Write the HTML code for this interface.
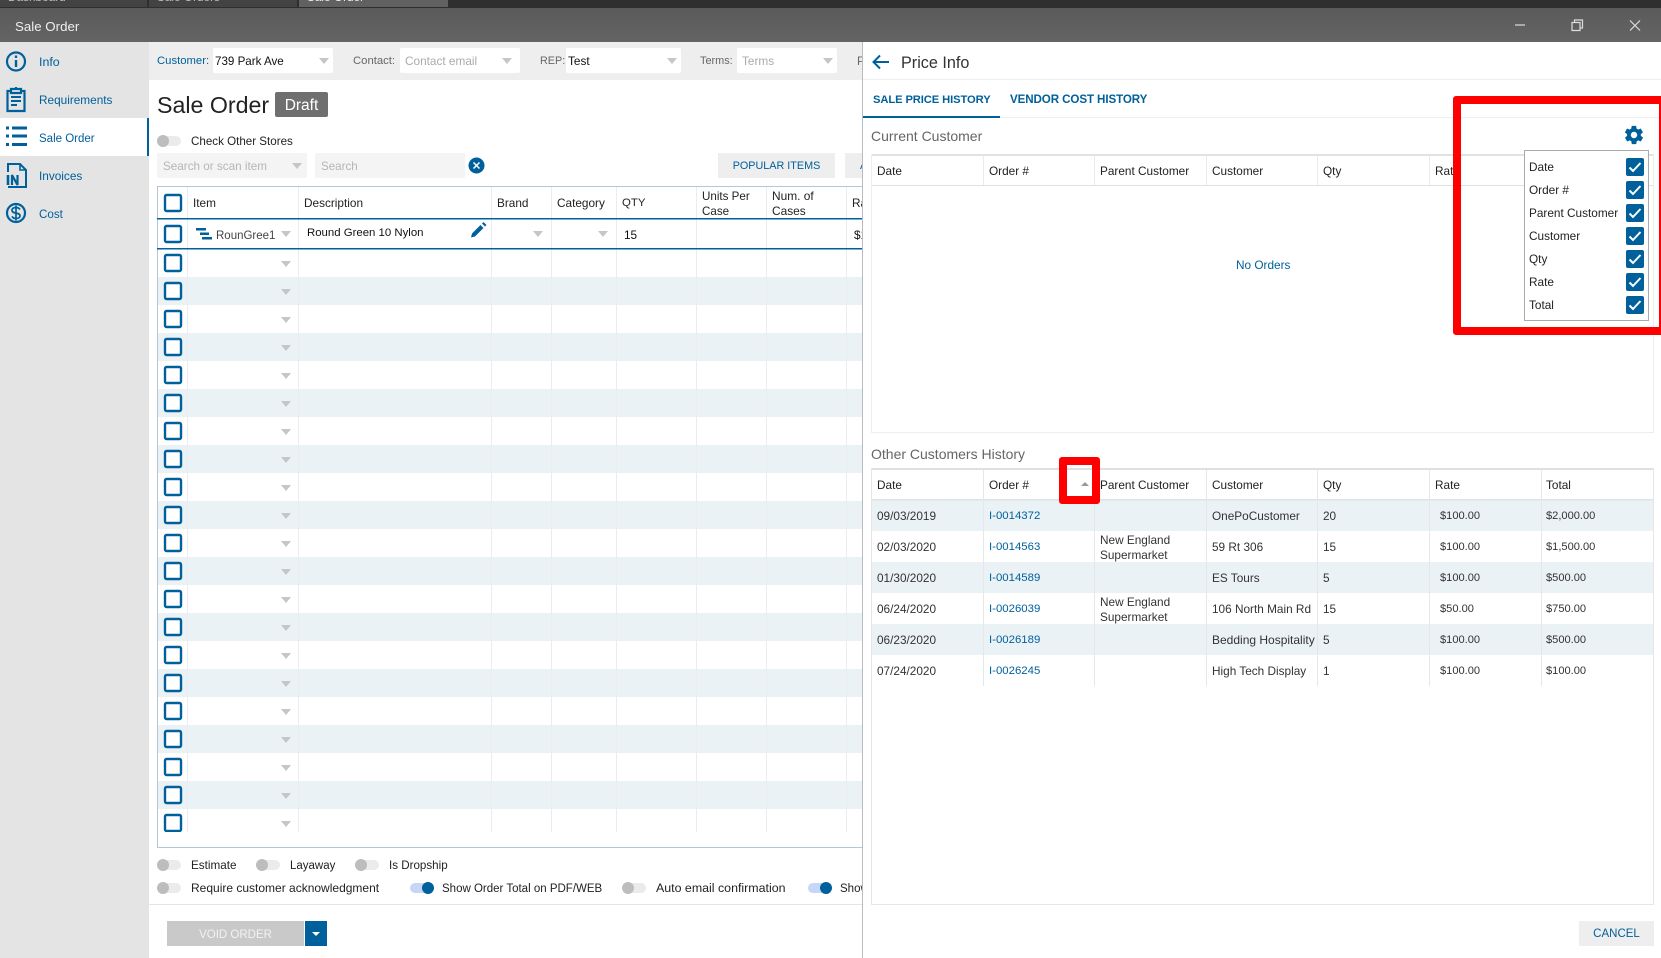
<!DOCTYPE html>
<html><head><meta charset="utf-8"><title>Sale Order</title>
<style>
html,body{margin:0;padding:0;width:1661px;height:958px;overflow:hidden;background:#fff}
body{position:relative;font-family:"Liberation Sans",sans-serif;font-size:11.8px;color:#333}
.a{position:absolute}
.t{position:absolute;white-space:nowrap;line-height:16px}
.b{color:#00609b}
.g{color:#aaa}
.k{color:#111}
.m{font-size:11.1px}
.box{position:absolute;background:#fff;border-radius:2px}
.tri{position:absolute;width:0;height:0;border-left:5px solid transparent;border-right:5px solid transparent;border-top:6px solid #c6c6c6}
.tg{position:absolute;width:24px;height:10px;border-radius:5px;background:#ebebeb}
.tg i{position:absolute;left:0;top:-1px;width:12px;height:12px;border-radius:50%;background:#bdbdbd}
.tg.on{background:#c6d6f6}
.tg.on i{left:12px;background:#00609b}
.cb{position:absolute;left:1626px;width:18px;height:18px;background:#00609b;border-radius:2px}
.cb svg{display:block}
</style></head><body>

<!-- top bars -->
<div class="a" style="left:0;top:0;width:1661px;height:8px;background:#2f2f2f"></div>
<div class="a" style="left:0;top:0;width:147px;height:7px;background:#434343"></div>
<div class="a" style="left:149px;top:0;width:148px;height:7px;background:#434343"></div>
<div class="a" style="left:299px;top:0;width:149px;height:7px;background:#616161"></div>
<div class="t" style="left:8px;top:-11px;color:#bbb">Dashboard</div>
<div class="t" style="left:157px;top:-11px;color:#bbb">Sale Orders</div>
<div class="t" style="left:307px;top:-11px;color:#eee">Sale Order</div>
<div class="a" style="left:0;top:8px;width:1661px;height:34px;background:linear-gradient(#5a5a5a,#646464)"></div>
<div class="t" style="left:15px;top:19px;color:#eee;font-size:13.300px">Sale Order</div>
<svg class="a" style="left:1510px;top:15px" width="140" height="20" fill="none" stroke="#ddd" stroke-width="1.200">
<path d="M5 10H15"/><path d="M62 7.500h8v8h-8zM64.500 7.500V5h8v8H70"/><path d="M120 5.500l10 10M130 5.500l-10 10"/></svg>

<!-- sidebar -->
<div class="a" style="left:0;top:42px;width:149px;height:916px;background:#e4e4e4"></div>
<div class="a" style="left:0;top:118px;width:147px;height:38px;background:#fff;border-right:2px solid #00609b"></div>
<svg class="a" style="left:0;top:42px" width="32" height="190" fill="none" stroke="#00609b">
<circle cx="16" cy="19.500" r="9" stroke-width="2.200"/>
<path d="M16 18v7" stroke-width="2.400"/><path d="M16 13.500v2.400" stroke-width="2.400"/>
<path d="M10 49H7.500v20h17V49H22M11 47h10v4H11zM16 45v2" stroke-width="2.200"/>
<path d="M11 55h10M11 59h10M11 63h6" stroke-width="2"/>
<path d="M6 86h3M6 94h3M6 102.500h3M12 86h15M12 94h15M12 102.500h15" stroke-width="3"/>
<path d="M8 130v-8h12l6 6v17H8" stroke-width="2"/><path d="M20 122v6h6" stroke-width="1.600"/>
<path d="M8 133v10" stroke-width="2.600"/><path d="M12 143v-10l5.500 10v-10" stroke-width="2.200"/>
<circle cx="16" cy="171" r="9" stroke-width="2.200"/>
<path d="M20 167.500c-1-1.500-2.500-2-4-2-2.300 0-4 1-4 2.800 0 4 8 1.700 8 5.400 0 1.800-1.700 2.800-4 2.800-1.700 0-3.200-.7-4-2.200M16 163.500v15" stroke-width="1.700"/>
</svg>
<div class="t b" style="left:39px;top:54px;font-size:12.400px">Info</div>
<div class="t b" style="left:39px;top:92px">Requirements</div>
<div class="t b" style="left:39px;top:131px;font-size:11.500px">Sale Order</div>
<div class="t b" style="left:39px;top:168px">Invoices</div>
<div class="t b" style="left:39px;top:207px;font-size:11.600px">Cost</div>

<!-- toolbar -->
<div class="a" style="left:149px;top:42px;width:714px;height:38px;background:#eee"></div>
<div class="box" style="left:213px;top:48px;width:120px;height:25px"></div>
<div class="box" style="left:400px;top:48px;width:120px;height:25px"></div>
<div class="box" style="left:566px;top:48px;width:115px;height:25px"></div>
<div class="box" style="left:737px;top:48px;width:100px;height:25px"></div>
<div class="t b" style="left:157px;top:53px;font-size:11.300px">Customer:</div>
<div class="t k" style="left:215px;top:54px;font-size:11.600px">739 Park Ave</div>
<div class="tri" style="left:319px;top:58px"></div>
<div class="t" style="left:353px;top:53px;color:#666;font-size:11.300px">Contact:</div>
<div class="t g" style="left:405px;top:53px">Contact email</div>
<div class="tri" style="left:502px;top:58px"></div>
<div class="t" style="left:540px;top:53px;color:#666;font-size:10.800px">REP:</div>
<div class="t k" style="left:568px;top:53px">Test</div>
<div class="tri" style="left:667px;top:58px"></div>
<div class="t" style="left:700px;top:53px;color:#666;font-size:10.900px">Terms:</div>
<div class="t g" style="left:742px;top:53px">Terms</div>
<div class="tri" style="left:823px;top:58px"></div>
<div class="t" style="left:857px;top:53px;color:#666">P</div>

<!-- heading -->
<div class="t" style="left:157px;top:91px;font-size:23.200px;line-height:28px;color:#222">Sale Order</div>
<div class="a" style="left:275px;top:92px;width:53px;height:25px;background:#6f6f6f;border-radius:2px;color:#fff;font-size:15.500px;line-height:27px;text-align:center">Draft</div>
<div class="tg" style="left:157px;top:136px"><i></i></div>
<div class="t" style="left:191px;top:134px;color:#222;font-size:11.600px">Check Other Stores</div>

<!-- search -->
<div class="a" style="left:157px;top:153px;width:150px;height:25px;background:#f4f4f4;border-radius:2px"></div>
<div class="t" style="left:163px;top:159px;color:#b5b5b5;font-size:11.700px">Search or scan item</div>
<div class="tri" style="left:292px;top:163px"></div>
<div class="a" style="left:315px;top:153px;width:150px;height:25px;background:#f4f4f4;border-radius:2px"></div>
<div class="t" style="left:321px;top:159px;color:#b5b5b5;font-size:11.600px">Search</div>
<svg class="a" style="left:468px;top:157px" width="18" height="18"><circle cx="8.500" cy="8.500" r="8" fill="#00609b"/><path d="M5.500 5.500l6 6M11.500 5.500l-6 6" stroke="#fff" stroke-width="1.500"/></svg>
<div class="a b" style="left:718px;top:153px;width:117px;height:25px;background:#eee;font-size:10.800px;line-height:27px;text-align:center">POPULAR ITEMS</div>
<div class="a b" style="left:845px;top:153px;width:18px;height:25px;background:#eee;font-size:10.800px;line-height:27px;text-indent:15px;overflow:hidden">A</div>

<!-- main table -->
<svg class="a" style="left:157px;top:186px" width="706" height="662">
<defs>
<pattern id="rw" x="0" y="63" width="706" height="56" patternUnits="userSpaceOnUse">
<rect y="28" width="706" height="28" fill="#ebf2f6"/>
<rect x="8" y="6" width="16" height="16" rx="1.500" fill="#fff" stroke="#00609b" stroke-width="2.400"/>
<rect x="8" y="34" width="16" height="16" rx="1.500" fill="#fff" stroke="#00609b" stroke-width="2.400"/>
<path d="M124 12h10l-5 6z" fill="#c6c6c6"/><path d="M124 40h10l-5 6z" fill="#c6c6c6"/>
</pattern>
</defs>
<rect x="0" y="63" width="706" height="583" fill="url(#rw)"/>
<g fill="#e9edf0">
<rect x="30" y="1" width="1" height="645"/><rect x="141" y="1" width="1" height="645"/><rect x="334" y="1" width="1" height="645"/><rect x="394" y="1" width="1" height="645"/><rect x="459" y="1" width="1" height="645"/><rect x="539" y="1" width="1" height="645"/><rect x="609" y="1" width="1" height="645"/><rect x="689" y="1" width="1" height="645"/>
</g>
<rect x="0" y="0" width="706" height="1" fill="#b4c6d8"/>
<rect x="0" y="661" width="706" height="1" fill="#b4c6d8"/>
<rect x="0" y="0" width="1" height="662" fill="#b4c6d8"/>
<rect x="0" y="32" width="706" height="1.500" fill="#00609b"/>
<rect x="0" y="62" width="706" height="1.500" fill="#00609b"/>
<rect x="8" y="9" width="16" height="16" rx="1.500" fill="#fff" stroke="#00609b" stroke-width="2.400"/>
<rect x="8" y="40" width="16" height="16" rx="1.500" fill="#fff" stroke="#00609b" stroke-width="2.400"/>
<path d="M39 42h10v2.500H39zM43 46.500h9v2.500h-9zM45 51h10v2.500H45z" fill="#00609b"/>
<path d="M124 45h10l-5 6z" fill="#c6c6c6"/><path d="M376 45h10l-5 6z" fill="#c6c6c6"/><path d="M441 45h10l-5 6z" fill="#c6c6c6"/>
<path d="M314 51.500l1-4 8.500-8.500 3 3-8.500 8.500zM325 37.500l1.500-1.500 3 3-1.500 1.500z" fill="#00609b"/>
</svg>
<div class="t" style="left:193px;top:195px;color:#222">Item</div>
<div class="t" style="left:304px;top:195px;color:#222">Description</div>
<div class="t" style="left:497px;top:195px;color:#222">Brand</div>
<div class="t" style="left:557px;top:195px;color:#222">Category</div>
<div class="t" style="left:622px;top:195px;color:#222;font-size:11.400px">QTY</div>
<div class="t" style="left:702px;top:189px;color:#222;line-height:15px;font-size:11.600px">Units Per<br>Case</div>
<div class="t" style="left:772px;top:189px;color:#222;line-height:15px;font-size:11.900px">Num. of<br>Cases</div>
<div class="t" style="left:852px;top:195px;color:#222">Ra</div>
<div class="t" style="left:216px;top:228px;color:#444;font-size:11.500px">RounGree1</div>
<div class="t k" style="left:307px;top:225px;font-size:11.400px">Round Green 10 Nylon</div>
<div class="t k" style="left:624px;top:227px">15</div>
<div class="t k" style="left:854px;top:227px">$1</div>

<!-- bottom options -->
<div class="tg" style="left:157px;top:860px"><i></i></div>
<div class="t" style="left:191px;top:858px;color:#222;font-size:11.700px">Estimate</div>
<div class="tg" style="left:256px;top:860px"><i></i></div>
<div class="t" style="left:290px;top:858px;color:#222;font-size:11.500px">Layaway</div>
<div class="tg" style="left:355px;top:860px"><i></i></div>
<div class="t" style="left:389px;top:858px;color:#222;font-size:11.600px">Is Dropship</div>
<div class="tg" style="left:157px;top:883px"><i></i></div>
<div class="t" style="left:191px;top:880px;color:#222;font-size:12px">Require customer acknowledgment</div>
<div class="tg on" style="left:410px;top:883px"><i></i></div>
<div class="t" style="left:442px;top:881px;color:#222;font-size:11.500px">Show Order Total on PDF/WEB</div>
<div class="tg" style="left:622px;top:883px"><i></i></div>
<div class="t" style="left:656px;top:880px;color:#222;font-size:12.400px">Auto email confirmation</div>
<div class="tg on" style="left:808px;top:883px"><i></i></div>
<div class="t" style="left:840px;top:881px;color:#222;font-size:11.500px;width:23px;overflow:hidden">Show</div>
<div class="a" style="left:149px;top:904px;width:714px;height:1px;background:#e4e4e4"></div>
<div class="a" style="left:167px;top:921px;width:137px;height:25px;background:#c9c9c9;color:#f2f2f2;font-size:11.500px;line-height:29px;text-align:center">VOID ORDER</div>
<div class="a" style="left:305px;top:921px;width:22px;height:25px;background:#00609b"></div>
<div class="a" style="left:312px;top:932px;width:0;height:0;border-left:4px solid transparent;border-right:4px solid transparent;border-top:4px solid #fff"></div>

<!-- right panel -->
<div class="a" style="left:862px;top:42px;width:799px;height:916px;background:#fff;border-left:1px solid #b8bcc0"></div>
<svg class="a" style="left:872px;top:54px" width="18" height="16" fill="none" stroke="#00609b" stroke-width="2"><path d="M1.500 8H17M8 1.500L1.500 8 8 14.500"/></svg>
<div class="t" style="left:901px;top:54px;font-size:16.200px;line-height:18px;color:#333">Price Info</div>
<div class="a" style="left:863px;top:79px;width:798px;height:1px;background:#eee"></div>
<div class="a" style="left:863px;top:117px;width:798px;height:1px;background:#eee"></div>
<div class="a" style="left:863px;top:116px;width:137px;height:2px;background:#00609b"></div>
<div class="t b" style="left:873px;top:92px;font-size:11.200px;font-weight:bold;letter-spacing:-.1px">SALE PRICE HISTORY</div>
<div class="t b" style="left:1010px;top:92px;font-size:11.600px;font-weight:bold;letter-spacing:-.1px">VENDOR COST HISTORY</div>
<div class="t" style="left:871px;top:128px;font-size:14px;color:#666">Current Customer</div>

<!-- current customer table -->
<svg class="a" style="left:871px;top:150px" width="784" height="290">
<rect x="0" y="4" width="783" height="2" fill="#e2e2e2"/>
<rect x="0" y="35" width="783" height="1" fill="#dfe2e4"/>
<rect x="0" y="282" width="783" height="1" fill="#eee"/>
<rect x="0" y="4" width="1" height="279" fill="#eee"/><rect x="782" y="4" width="1" height="279" fill="#eee"/>
<g fill="#e8ebed"><rect x="112" y="5" width="1" height="30"/><rect x="223" y="5" width="1" height="30"/><rect x="335" y="5" width="1" height="30"/><rect x="446" y="5" width="1" height="30"/><rect x="558" y="5" width="1" height="30"/><rect x="670" y="5" width="1" height="30"/></g>
</svg>
<div class="t" style="left:877px;top:163px;color:#222">Date</div>
<div class="t" style="left:989px;top:163px;color:#222">Order #</div>
<div class="t" style="left:1100px;top:163px;color:#222">Parent Customer</div>
<div class="t" style="left:1212px;top:163px;color:#222">Customer</div>
<div class="t" style="left:1323px;top:163px;color:#222">Qty</div>
<div class="t" style="left:1435px;top:163px;color:#222">Rate</div>
<div class="t" style="left:1546px;top:163px;color:#222">Total</div>
<div class="t b" style="left:1236px;top:257px">No Orders</div>

<div class="t" style="left:871px;top:446px;font-size:14px;color:#666">Other Customers History</div>

<!-- other customers table -->
<svg class="a" style="left:871px;top:466px" width="784" height="492">
<rect x="0" y="34" width="782" height="31" fill="#ebf2f6"/><rect x="0" y="96" width="782" height="31" fill="#ebf2f6"/><rect x="0" y="158" width="782" height="31" fill="#ebf2f6"/>
<rect x="0" y="2" width="783" height="2" fill="#e0e0e0"/>
<rect x="0" y="33" width="783" height="1.500" fill="#dfe2e4"/>
<g fill="#e4e8eb"><rect x="112" y="4" width="1" height="216"/><rect x="223" y="4" width="1" height="216"/><rect x="335" y="4" width="1" height="216"/><rect x="446" y="4" width="1" height="216"/><rect x="558" y="4" width="1" height="216"/><rect x="670" y="4" width="1" height="216"/></g>
<rect x="0" y="2" width="1" height="436" fill="#e6e6e6"/><rect x="782" y="2" width="1" height="436" fill="#e6e6e6"/>
<rect x="0" y="438" width="783" height="1" fill="#e6e6e6"/>
<path d="M210 20l4-4 4 4z" fill="#999"/>
</svg>
<div class="t" style="left:877px;top:477px;color:#222">Date</div>
<div class="t" style="left:989px;top:477px;color:#222">Order #</div>
<div class="t" style="left:1100px;top:477px;color:#222">Parent Customer</div>
<div class="t" style="left:1212px;top:477px;color:#222">Customer</div>
<div class="t" style="left:1323px;top:477px;color:#222">Qty</div>
<div class="t" style="left:1435px;top:477px;color:#222">Rate</div>
<div class="t" style="left:1546px;top:477px;color:#222">Total</div>

<div class="t m" style="left:877px;top:508px;font-size:11.800px">09/03/2019</div><div class="t b m" style="left:989px;top:508px;font-size:11.400px">I-0014372</div><div class="t" style="left:1212px;top:508px">OnePoCustomer</div><div class="t" style="left:1323px;top:508px">20</div><div class="t m" style="left:1440px;top:508px">$100.00</div><div class="t m" style="left:1546px;top:508px">$2,000.00</div>
<div class="t m" style="left:877px;top:539px;font-size:11.800px">02/03/2020</div><div class="t b m" style="left:989px;top:539px;font-size:11.400px">I-0014563</div><div class="t" style="left:1100px;top:533px;line-height:15px">New England<br>Supermarket</div><div class="t" style="left:1212px;top:539px">59 Rt 306</div><div class="t" style="left:1323px;top:539px">15</div><div class="t m" style="left:1440px;top:539px">$100.00</div><div class="t m" style="left:1546px;top:539px">$1,500.00</div>
<div class="t m" style="left:877px;top:570px;font-size:11.800px">01/30/2020</div><div class="t b m" style="left:989px;top:570px;font-size:11.400px">I-0014589</div><div class="t" style="left:1212px;top:570px">ES Tours</div><div class="t" style="left:1323px;top:570px">5</div><div class="t m" style="left:1440px;top:570px">$100.00</div><div class="t m" style="left:1546px;top:570px">$500.00</div>
<div class="t m" style="left:877px;top:601px;font-size:11.800px">06/24/2020</div><div class="t b m" style="left:989px;top:601px;font-size:11.400px">I-0026039</div><div class="t" style="left:1100px;top:595px;line-height:15px">New England<br>Supermarket</div><div class="t" style="left:1212px;top:601px">106 North Main Rd</div><div class="t" style="left:1323px;top:601px">15</div><div class="t m" style="left:1440px;top:601px">$50.00</div><div class="t m" style="left:1546px;top:601px">$750.00</div>
<div class="t m" style="left:877px;top:632px;font-size:11.800px">06/23/2020</div><div class="t b m" style="left:989px;top:632px;font-size:11.400px">I-0026189</div><div class="t" style="left:1212px;top:632px;font-size:12px">Bedding Hospitality</div><div class="t" style="left:1323px;top:632px">5</div><div class="t m" style="left:1440px;top:632px">$100.00</div><div class="t m" style="left:1546px;top:632px">$500.00</div>
<div class="t m" style="left:877px;top:663px;font-size:11.800px">07/24/2020</div><div class="t b m" style="left:989px;top:663px;font-size:11.400px">I-0026245</div><div class="t" style="left:1212px;top:663px">High Tech Display</div><div class="t" style="left:1323px;top:663px">1</div><div class="t m" style="left:1440px;top:663px">$100.00</div><div class="t m" style="left:1546px;top:663px">$100.00</div>

<div class="a b" style="left:1579px;top:921px;width:75px;height:25px;background:#eee;line-height:27px;text-align:center;font-size:11.500px">CANCEL</div>

<!-- popup -->
<svg class="a" style="left:1623px;top:124px" width="22" height="22" viewBox="0 0 24 24"><path fill="#00609b" d="M19.400 13c.1-.3.100-.7.100-1s0-.7-.1-1l2.100-1.600c.2-.2.200-.4.100-.6l-2-3.500c-.1-.2-.4-.3-.6-.2l-2.500 1c-.5-.4-1.100-.7-1.700-1l-.4-2.600c0-.3-.2-.4-.5-.4h-4c-.3 0-.5.100-.5.400l-.4 2.600c-.6.300-1.200.6-1.700 1l-2.500-1c-.2-.1-.5 0-.6.200l-2 3.500c-.1.200-.1.400.1.600L4.500 11c0 .3-.1.700-.1 1s0 .7.100 1l-2.100 1.600c-.2.200-.2.400-.1.600l2 3.500c.1.200.4.300.6.200l2.500-1c.5.400 1.100.7 1.700 1l.4 2.600c0 .3.200.4.500.4h4c.3 0 .5-.1.500-.4l.4-2.600c.6-.3 1.200-.6 1.700-1l2.500 1c.2.100.5 0 .6-.2l2-3.500c.1-.2.100-.4-.1-.6zM12 15.500a3.500 3.500 0 1 1 0-7 3.500 3.500 0 0 1 0 7z"/></svg>
<div class="a" style="left:1524px;top:150px;width:123px;height:169px;background:#fff;border:1px solid #aaa"></div>
<div class="t" style="left:1529px;top:159px;color:#222">Date</div>
<div class="t" style="left:1529px;top:182px;color:#222">Order #</div>
<div class="t" style="left:1529px;top:205px;color:#222">Parent Customer</div>
<div class="t" style="left:1529px;top:228px;color:#222">Customer</div>
<div class="t" style="left:1529px;top:251px;color:#222">Qty</div>
<div class="t" style="left:1529px;top:274px;color:#222">Rate</div>
<div class="t" style="left:1529px;top:297px;color:#222">Total</div>
<div class="cb" style="top:158px"><svg width="18" height="18"><path d="M3.500 9.500l3.500 3.500 7.500-8" fill="none" stroke="#fff" stroke-width="2"/></svg></div>
<div class="cb" style="top:181px"><svg width="18" height="18"><path d="M3.500 9.500l3.500 3.500 7.500-8" fill="none" stroke="#fff" stroke-width="2"/></svg></div>
<div class="cb" style="top:204px"><svg width="18" height="18"><path d="M3.500 9.500l3.500 3.500 7.500-8" fill="none" stroke="#fff" stroke-width="2"/></svg></div>
<div class="cb" style="top:227px"><svg width="18" height="18"><path d="M3.500 9.500l3.500 3.500 7.500-8" fill="none" stroke="#fff" stroke-width="2"/></svg></div>
<div class="cb" style="top:250px"><svg width="18" height="18"><path d="M3.500 9.500l3.500 3.500 7.500-8" fill="none" stroke="#fff" stroke-width="2"/></svg></div>
<div class="cb" style="top:273px"><svg width="18" height="18"><path d="M3.500 9.500l3.500 3.500 7.500-8" fill="none" stroke="#fff" stroke-width="2"/></svg></div>
<div class="cb" style="top:296px"><svg width="18" height="18"><path d="M3.500 9.500l3.500 3.500 7.500-8" fill="none" stroke="#fff" stroke-width="2"/></svg></div>

<!-- red annotation boxes -->
<div class="a" style="left:1453px;top:96px;width:198px;height:223px;border:8px solid #f00;border-radius:3px;border-right-width:5px"></div>
<div class="a" style="left:1059px;top:457px;width:25px;height:31px;border:8px solid #f00;border-radius:3px"></div>

</body></html>
